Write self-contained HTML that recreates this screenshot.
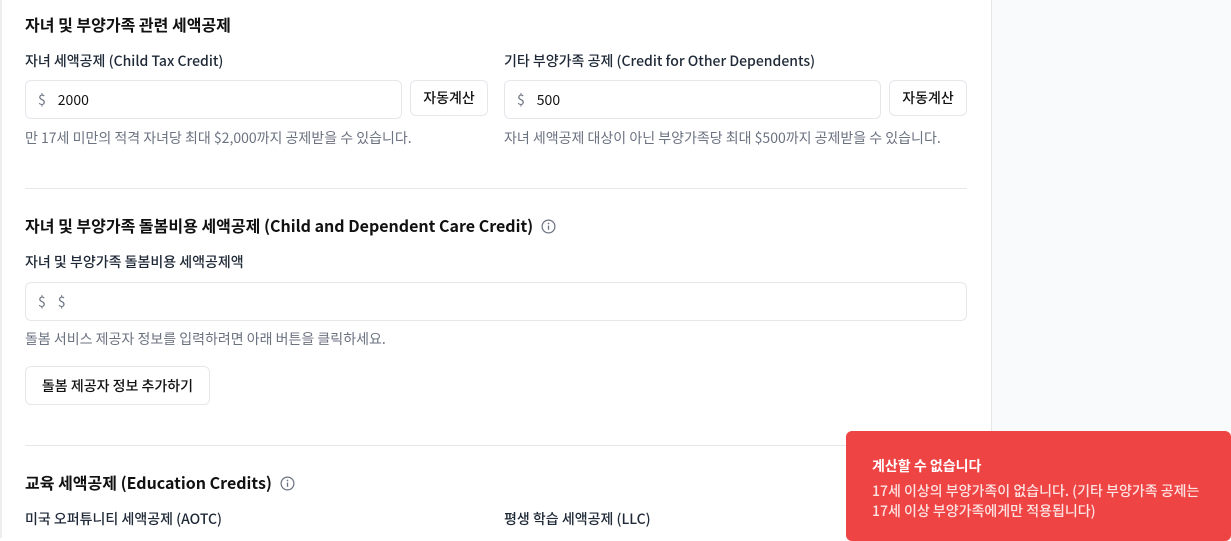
<!DOCTYPE html>
<html><head><meta charset="utf-8"><style>
*{box-sizing:border-box;margin:0;padding:0}
body{width:1231px;height:538px;overflow:hidden;background:#fff;font-family:"Noto Sans CJK KR","Liberation Sans",sans-serif;color:#111;position:relative}
.a{position:absolute;white-space:nowrap;line-height:20px}
.h{font-size:16px;font-weight:700}
.l{font-size:14px;font-weight:500;color:#1f2937}
.help{font-size:14px;color:#6b7280}
.inp{position:absolute;border:1px solid #e5e7eb;border-radius:6px;height:39px;font-size:14px;display:flex;align-items:center;padding-left:12px}
.inp .d{color:#6b7280;margin-right:12px}
.btn{position:absolute;border:1px solid #e5e7eb;border-radius:6px;font-size:14px;font-weight:500;display:flex;align-items:center;justify-content:center;background:#fff}
.hr{position:absolute;left:25px;width:942px;height:1px;background:#e5e7eb}
.side{position:absolute;left:991px;top:0;width:240px;height:538px;background:#f9fafb;border-left:1px solid #e5e7eb}
.info{display:inline-block;vertical-align:-2px;margin-left:8px}
.toast{position:absolute;left:846px;top:431px;width:385px;height:110px;background:#ef4444;border-radius:6px;color:#fff;padding:25px 0 0 26px}
</style></head><body>
<div class="side"></div>
<div style="position:absolute;left:0;top:0;width:2px;height:538px;background:#eee"></div>
<div class="a h" style="left:25px;top:14px">자녀 및 부양가족 관련 세액공제</div>
<div class="a l" style="left:25px;top:51px">자녀 세액공제 (Child Tax Credit)</div>
<div class="inp" style="left:25px;top:80px;width:377px"><span class="d">$</span>2000</div>
<div class="btn" style="left:410px;top:80px;width:78px;height:36px">자동계산</div>
<div class="a help" style="left:25px;top:128px">만 17세 미만의 적격 자녀당 최대 $2,000까지 공제받을 수 있습니다.</div>
<div class="a l" style="left:504px;top:51px">기타 부양가족 공제 (Credit for Other Dependents)</div>
<div class="inp" style="left:504px;top:80px;width:377px"><span class="d">$</span>500</div>
<div class="btn" style="left:889px;top:80px;width:78px;height:36px">자동계산</div>
<div class="a help" style="left:504px;top:128px">자녀 세액공제 대상이 아닌 부양가족당 최대 $500까지 공제받을 수 있습니다.</div>
<div class="hr" style="top:188px"></div>
<div class="a h" style="left:25px;top:215px">자녀 및 부양가족 돌봄비용 세액공제 (Child and Dependent Care Credit)<svg class="info" width="15" height="15" viewBox="0 0 16 16"><circle cx="8" cy="8" r="6.8" fill="none" stroke="#6b7280" stroke-width="1.3"/><line x1="8" y1="7" x2="8" y2="11.5" stroke="#6b7280" stroke-width="1.4"/><circle cx="8" cy="4.8" r="0.9" fill="#6b7280"/></svg></div>
<div class="a l" style="left:25px;top:252px">자녀 및 부양가족 돌봄비용 세액공제액</div>
<div class="inp" style="left:25px;top:282px;width:942px"><span class="d">$</span><span style="color:#6b7280">$</span></div>
<div class="a help" style="left:25px;top:329px">돌봄 서비스 제공자 정보를 입력하려면 아래 버튼을 클릭하세요.</div>
<div class="btn" style="left:25px;top:366px;width:185px;height:39px">돌봄 제공자 정보 추가하기</div>
<div class="hr" style="top:445px"></div>
<div class="a h" style="left:25px;top:472px">교육 세액공제 (Education Credits)<svg class="info" width="15" height="15" viewBox="0 0 16 16"><circle cx="8" cy="8" r="6.8" fill="none" stroke="#6b7280" stroke-width="1.3"/><line x1="8" y1="7" x2="8" y2="11.5" stroke="#6b7280" stroke-width="1.4"/><circle cx="8" cy="4.8" r="0.9" fill="#6b7280"/></svg></div>
<div class="a l" style="left:25px;top:509px">미국 오퍼튜니티 세액공제 (AOTC)</div>
<div class="a l" style="left:504px;top:509px">평생 학습 세액공제 (LLC)</div>
<div class="toast">
<div style="font-size:14px;font-weight:700;line-height:20px">계산할 수 없습니다</div>
<div style="font-size:14px;font-weight:500;line-height:20px;margin-top:5px;color:#fde2e2">17세 이상의 부양가족이 없습니다. (기타 부양가족 공제는<br>17세 이상 부양가족에게만 적용됩니다)</div>
</div>
</body></html>
